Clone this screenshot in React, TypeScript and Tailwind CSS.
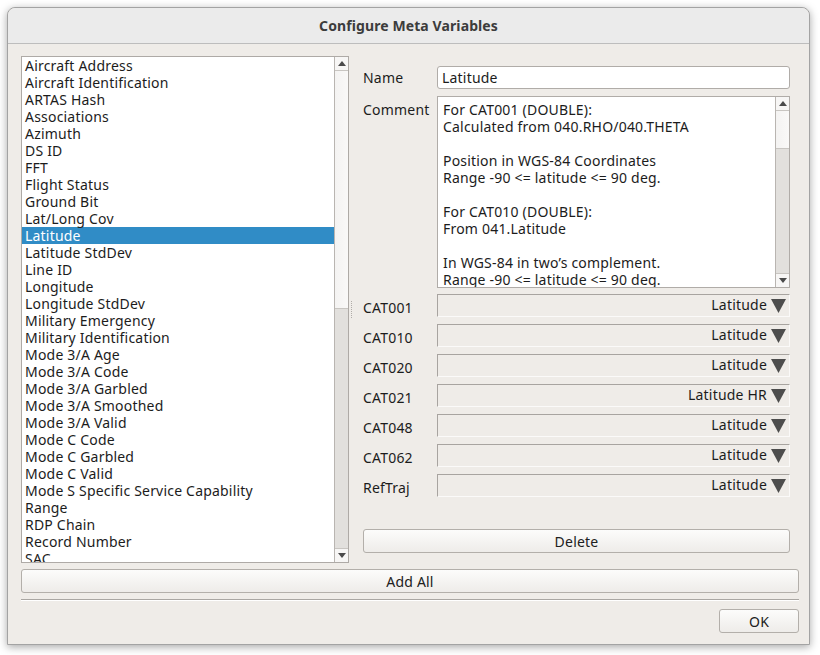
import React from "react";

const items = [
  "Aircraft Address",
  "Aircraft Identification",
  "ARTAS Hash",
  "Associations",
  "Azimuth",
  "DS ID",
  "FFT",
  "Flight Status",
  "Ground Bit",
  "Lat/Long Cov",
  "Latitude",
  "Latitude StdDev",
  "Line ID",
  "Longitude",
  "Longitude StdDev",
  "Military Emergency",
  "Military Identification",
  "Mode 3/A Age",
  "Mode 3/A Code",
  "Mode 3/A Garbled",
  "Mode 3/A Smoothed",
  "Mode 3/A Valid",
  "Mode C Code",
  "Mode C Garbled",
  "Mode C Valid",
  "Mode S Specific Service Capability",
  "Range",
  "RDP Chain",
  "Record Number",
  "SAC",
];

const comment = [
  "For CAT001 (DOUBLE):",
  "Calculated from 040.RHO/040.THETA",
  "",
  "Position in WGS-84 Coordinates",
  "Range -90 <= latitude <= 90 deg.",
  "",
  "For CAT010 (DOUBLE):",
  "From 041.Latitude",
  "",
  "In WGS-84 in two\u2019s complement.",
  "Range -90 <= latitude <= 90 deg.",
];

const combos: [string, string][] = [
  ["CAT001", "Latitude"],
  ["CAT010", "Latitude"],
  ["CAT020", "Latitude"],
  ["CAT021", "Latitude HR"],
  ["CAT048", "Latitude"],
  ["CAT062", "Latitude"],
  ["RefTraj", "Latitude"],
];

function UpArrow() {
  return (
    <svg width="8" height="5" viewBox="0 0 8 5">
      <polygon points="0,5 8,5 4,0" fill="#4a4a4a" />
    </svg>
  );
}
function DownArrow() {
  return (
    <svg width="8" height="5" viewBox="0 0 8 5">
      <polygon points="0,0 8,0 4,5" fill="#4a4a4a" />
    </svg>
  );
}

function Scrollbar({ thumb }: { thumb: number }) {
  return (
    <div className="flex w-[14px] shrink-0 flex-col border-l border-[#b9b5b1] bg-[#e2e0dd]">
      <div className="flex h-[14px] shrink-0 items-center justify-center border-b border-[#c8c5c1] bg-[#f7f6f5]">
        <UpArrow />
      </div>
      <div
        className="shrink-0 border-b border-[#c8c5c1] bg-gradient-to-r from-[#f4f3f2] to-[#faf9f8]"
        style={{ height: thumb }}
      />
      <div className="flex-1" />
      <div className="flex h-[14px] shrink-0 items-center justify-center border-t border-[#c8c5c1] bg-[#f7f6f5]">
        <DownArrow />
      </div>
    </div>
  );
}

function Button({ label, className }: { label: string; className: string }) {
  return (
    <div
      className={
        "flex items-center justify-center rounded-[3px] border border-[#b3afaa] bg-gradient-to-b from-[#fcfcfb] to-[#eeece9] text-[14px] tracking-[0.2px] text-[#202020] " +
        className
      }
    >
      {label}
    </div>
  );
}

export default function App() {
  return (
    <div
      className="h-[655px] w-[820px] overflow-hidden bg-white pl-[7px] pt-[7px]"
      style={{ fontFamily: '"Noto Sans", "DejaVu Sans", sans-serif' }}
    >
      <div className="flex h-[638px] w-[803px] flex-col rounded-t-[8px] border border-[#a3a3a3] bg-[#efece8] shadow-[0_2px_9px_rgba(0,0,0,0.35)]">
        {/* Title bar */}
        <div className="flex h-[36px] shrink-0 items-center justify-center rounded-t-[8px] border-b border-[#bdbdbd] bg-[#ebebeb] text-[14px] font-bold tracking-[0.1px] text-[#3c3c3c]">
          Configure Meta Variables
        </div>

        {/* Body */}
        <div className="flex flex-1 flex-col pl-[13px] pr-[10px] pt-[12px] text-[14px] tracking-[0.2px]">
          <div className="flex h-[507px]">
            {/* List */}
            <div className="flex w-[328px] border border-[#aeaaa6] bg-white">
              <div className="flex-1 overflow-hidden">
                {items.map((it) => (
                  <div
                    key={it}
                    className={
                      "h-[17px] whitespace-nowrap pl-[3px] leading-[17px] " +
                      (it === "Latitude" ? "bg-[#308cc6] text-white" : "text-[#1c1c1c]")
                    }
                  >
                    {it}
                  </div>
                ))}
              </div>
              <Scrollbar thumb={238} />
            </div>

            {/* Splitter */}
            <div className="flex w-[14px] justify-start pl-[2px] pt-[245px]">
              <div className="h-[17px] w-[1px] border-l border-dotted border-[#b0aca8]" />
            </div>

            {/* Right panel */}
            <div className="flex flex-1 flex-col pr-[9px] pt-[10px]">
              <div className="flex h-[23px] items-center">
                <div className="w-[74px] text-[#1c1c1c]">Name</div>
                <div className="flex h-[23px] flex-1 items-center rounded-[3px] border border-[#b0aca8] bg-white pl-[4px] text-[#1c1c1c]">
                  Latitude
                </div>
              </div>

              <div className="mt-[7px] flex h-[192px]">
                <div className="w-[74px] pt-[5px] leading-[17px] text-[#1c1c1c]">Comment</div>
                <div className="flex flex-1 border border-[#b0aca8] bg-white">
                  <div className="flex-1 overflow-hidden pl-[5px] pt-[4px] leading-[17px] text-[#1c1c1c]">
                    {comment.map((l, i) => (
                      <div key={i} className="h-[17px] whitespace-nowrap">
                        {l}
                      </div>
                    ))}
                  </div>
                  <Scrollbar thumb={38} />
                </div>
              </div>

              <div className="mt-[6px] flex flex-col gap-[7px]">
                {combos.map(([k, v]) => (
                  <div key={k} className="flex h-[23px] items-center">
                    <div className="w-[74px] pt-[3px] text-[#1c1c1c]">{k}</div>
                    <div className="flex h-[23px] flex-1 items-center justify-end border-b border-l border-r border-t border-b-[#fbfaf9] border-l-[#a8a4a0] border-r-[#fbfaf9] border-t-[#a8a4a0] pr-[2px] text-[#1c1c1c]">
                      <span className="pb-[2px]">{v}</span>
                      <svg width="17" height="16" viewBox="0 0 17 16" className="ml-[3px]">
                        <polygon points="1,1 16,1 8.5,15" fill="#4d4d4d" />
                      </svg>
                    </div>
                  </div>
                ))}
              </div>

              <Button label="Delete" className="mt-[32px] h-[24px]" />
            </div>
          </div>

          <Button label="Add All" className="mt-[6px] h-[24px]" />

          <div className="mt-[6px] h-[2px] border-b border-t border-b-white border-t-[#a9a6a2]" />

          <div className="mt-[8px] flex justify-end">
            <Button label="OK" className="h-[24px] w-[80px]" />
          </div>
        </div>
      </div>
    </div>
  );
}
